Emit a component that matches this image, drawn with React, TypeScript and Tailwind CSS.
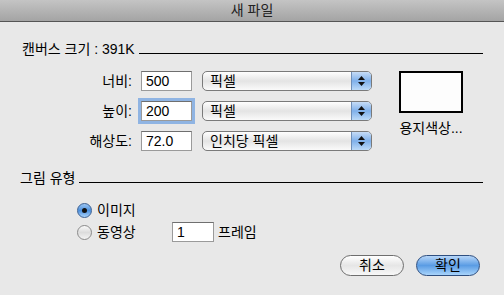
const font = "font-['Liberation_Sans','Noto_Sans_CJK_KR',sans-serif]";

function Field({ value, focused, width = 'w-[51px]' }: { value: string; focused?: boolean; width?: string }) {
  return (
    <div
      className={`${width} h-[20px] bg-white border border-[#9a9a9a] border-t-[#6f6f6f] flex items-center pl-[4px] text-[14px] text-black ${
        focused ? 'shadow-[0_0_0_3px_#8fb4e3]' : ''
      }`}
    >
      {value}
    </div>
  );
}

function Select({ label }: { label: string }) {
  return (
    <div className="w-[170px] h-[20px] rounded-[5px] border border-[#7a7a7a] flex overflow-hidden bg-gradient-to-b from-white via-[#e4e4e4] to-[#fafafa]">
      <div className="flex-1 flex items-center pl-[7px] text-[14px] text-black">{label}</div>
      <div className="w-[20px] border-l border-[#6f8fb8] bg-gradient-to-b from-[#c6dcf6] via-[#7fb0ea] to-[#bcdaf8] flex flex-col items-center justify-center gap-[2px]">
        <svg width="7" height="4" viewBox="0 0 7 4">
          <path d="M3.5 0 L7 4 L0 4 Z" fill="#111" />
        </svg>
        <svg width="7" height="4" viewBox="0 0 7 4">
          <path d="M0 0 L7 0 L3.5 4 Z" fill="#111" />
        </svg>
      </div>
    </div>
  );
}

function Row({ label, value, unit, focused }: { label: string; value: string; unit: string; focused?: boolean }) {
  return (
    <div className="h-[22px] flex items-center">
      <div className="w-[110px] text-right text-[14px] text-black">{label}</div>
      <div className="ml-[9px]">
        <Field value={value} focused={focused} />
      </div>
      <div className="ml-[10px]">
        <Select label={unit} />
      </div>
    </div>
  );
}

function Radio({ checked }: { checked?: boolean }) {
  return checked ? (
    <div className="w-[15px] h-[15px] rounded-full border border-[#3b5f92] bg-gradient-to-b from-[#9cc6f2] via-[#4b8fdc] to-[#a9d3fa] flex items-center justify-center">
      <div className="w-[5px] h-[5px] rounded-full bg-[#111]" />
    </div>
  ) : (
    <div className="w-[15px] h-[15px] rounded-full border border-[#8a8a8a] bg-gradient-to-b from-[#fafafa] via-[#dcdcdc] to-[#f4f4f4]" />
  );
}

function SectionHeader({ title, className = '' }: { title: string; className?: string }) {
  return (
    <div className={`flex items-end ${className}`}>
      <span className="text-[14px] leading-[16px] text-black whitespace-nowrap">{title}</span>
      <div className="flex-1 h-px bg-black ml-[4px] mb-[3px]" />
    </div>
  );
}

export default function App() {
  return (
    <div className={`w-[504px] h-[295px] bg-[#e8e8e8] flex flex-col ${font}`}>
      {/* title bar */}
      <div className="h-[22px] border-b border-[#555] bg-gradient-to-b from-[#c4c4c4] to-[#a4a4a4] flex items-center justify-center text-[14px] text-[#222]">
        새 파일
      </div>

      <div className="pl-[22px] pr-[21px] flex flex-col">
        <SectionHeader title="캔버스 크기 : 391K" className="mt-[19px]" />

        <div className="flex mt-[13px]">
          <div className="flex flex-col gap-[8px]">
            <Row label="너비:" value="500" unit="픽셀" />
            <Row label="높이:" value="200" unit="픽셀" focused />
            <Row label="해상도:" value="72.0" unit="인치당 픽셀" />
          </div>
          <div className="ml-[27px] mt-[1px] flex flex-col items-center">
            <div className="w-[64px] h-[42px] bg-[#fdfdfd] border-2 border-black" />
            <div className="mt-[5px] text-[14px] text-black">용지색상...</div>
          </div>
        </div>

        <SectionHeader title="그림 유형" className="mt-[18px] -ml-[2px]" />

        <div className="ml-[55px] mt-[16px] flex flex-col gap-[3px]">
          <div className="h-[16px] flex items-center">
            <Radio checked />
            <span className="ml-[5px] text-[14px] text-black">이미지</span>
          </div>
          <div className="h-[22px] flex items-center">
            <Radio />
            <span className="ml-[5px] w-[75px] text-[14px] text-black">동영상</span>
            <Field value="1" width="w-[42px]" />
            <span className="ml-[4px] text-[14px] text-black">프레임</span>
          </div>
        </div>

        <div className="mt-[12px] mr-[3px] flex justify-end gap-[12px]">
          <div className="w-[64px] h-[21px] rounded-full border border-[#6e6e6e] bg-gradient-to-b from-white via-[#e6e6e6] to-[#f8f8f8] flex items-center justify-center text-[14px] text-black">
            취소
          </div>
          <div className="w-[64px] h-[21px] rounded-full border border-[#2f4f80] bg-gradient-to-b from-[#b6d6f8] via-[#5a9ce4] to-[#a8d4fb] flex items-center justify-center text-[14px] text-black">
            확인
          </div>
        </div>
      </div>
    </div>
  );
}
